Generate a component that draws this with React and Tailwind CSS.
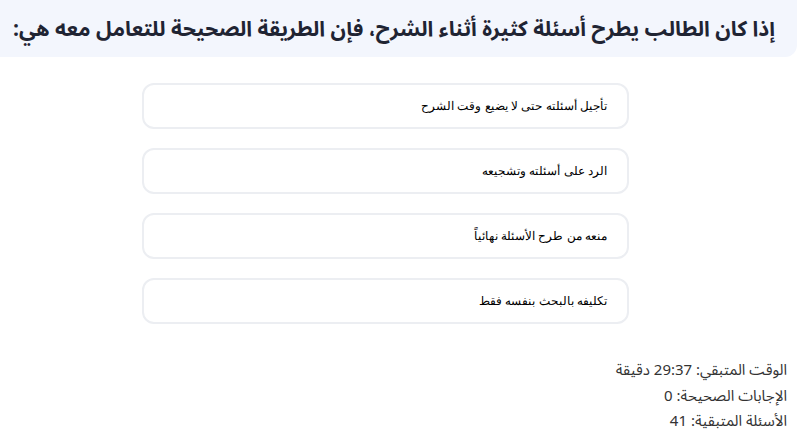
import React from 'react';

const options = [
    'تأجيل أسئلته حتى لا يضيع وقت الشرح',
    'الرد على أسئلته وتشجيعه',
    'منعه من طرح الأسئلة نهائياً',
    'تكليفه بالبحث بنفسه فقط',
];

const App = () => {
    return (
        <div dir="rtl" className="w-[800px] h-[445px] overflow-hidden bg-white">
            {/* Question header */}
            <div className="w-[797px] mr-[3px] h-[57px] bg-[#f3f6fd] rounded-br-xl flex items-center pr-[22px] pt-[3px] overflow-hidden">
                <h2 className="whitespace-nowrap text-[21.1px] font-bold text-[#1f2433] font-['Noto_Sans_Arabic','Noto_Sans',sans-serif]">
                    إذا كان الطالب يطرح أسئلة كثيرة أثناء الشرح، فإن الطريقة الصحيحة للتعامل معه هي:
                </h2>
            </div>

            {/* Answer options */}
            <div className="mr-[171px] w-[487px] mt-[26px] flex flex-col gap-[19px]">
                {options.map((opt, idx) => (
                    <button
                        key={idx}
                        className="h-[46px] w-full rounded-xl border-2 border-[#eceef2] bg-white flex items-center pr-[20px] text-right text-[12px] text-black font-['Liberation_Sans',Arial,sans-serif]"
                    >
                        {opt}
                    </button>
                ))}
            </div>

            {/* Stats */}
            <div className="mt-[36px] pr-[13px] flex flex-col gap-[5.5px] text-[15px] leading-[20px] text-[#333] font-['Noto_Sans_Arabic','Open_Sans',sans-serif]">
                <div>الوقت المتبقي: 29:37 دقيقة</div>
                <div>الإجابات الصحيحة: 0</div>
                <div>الأسئلة المتبقية: 41</div>
            </div>
        </div>
    );
};

export default App;
